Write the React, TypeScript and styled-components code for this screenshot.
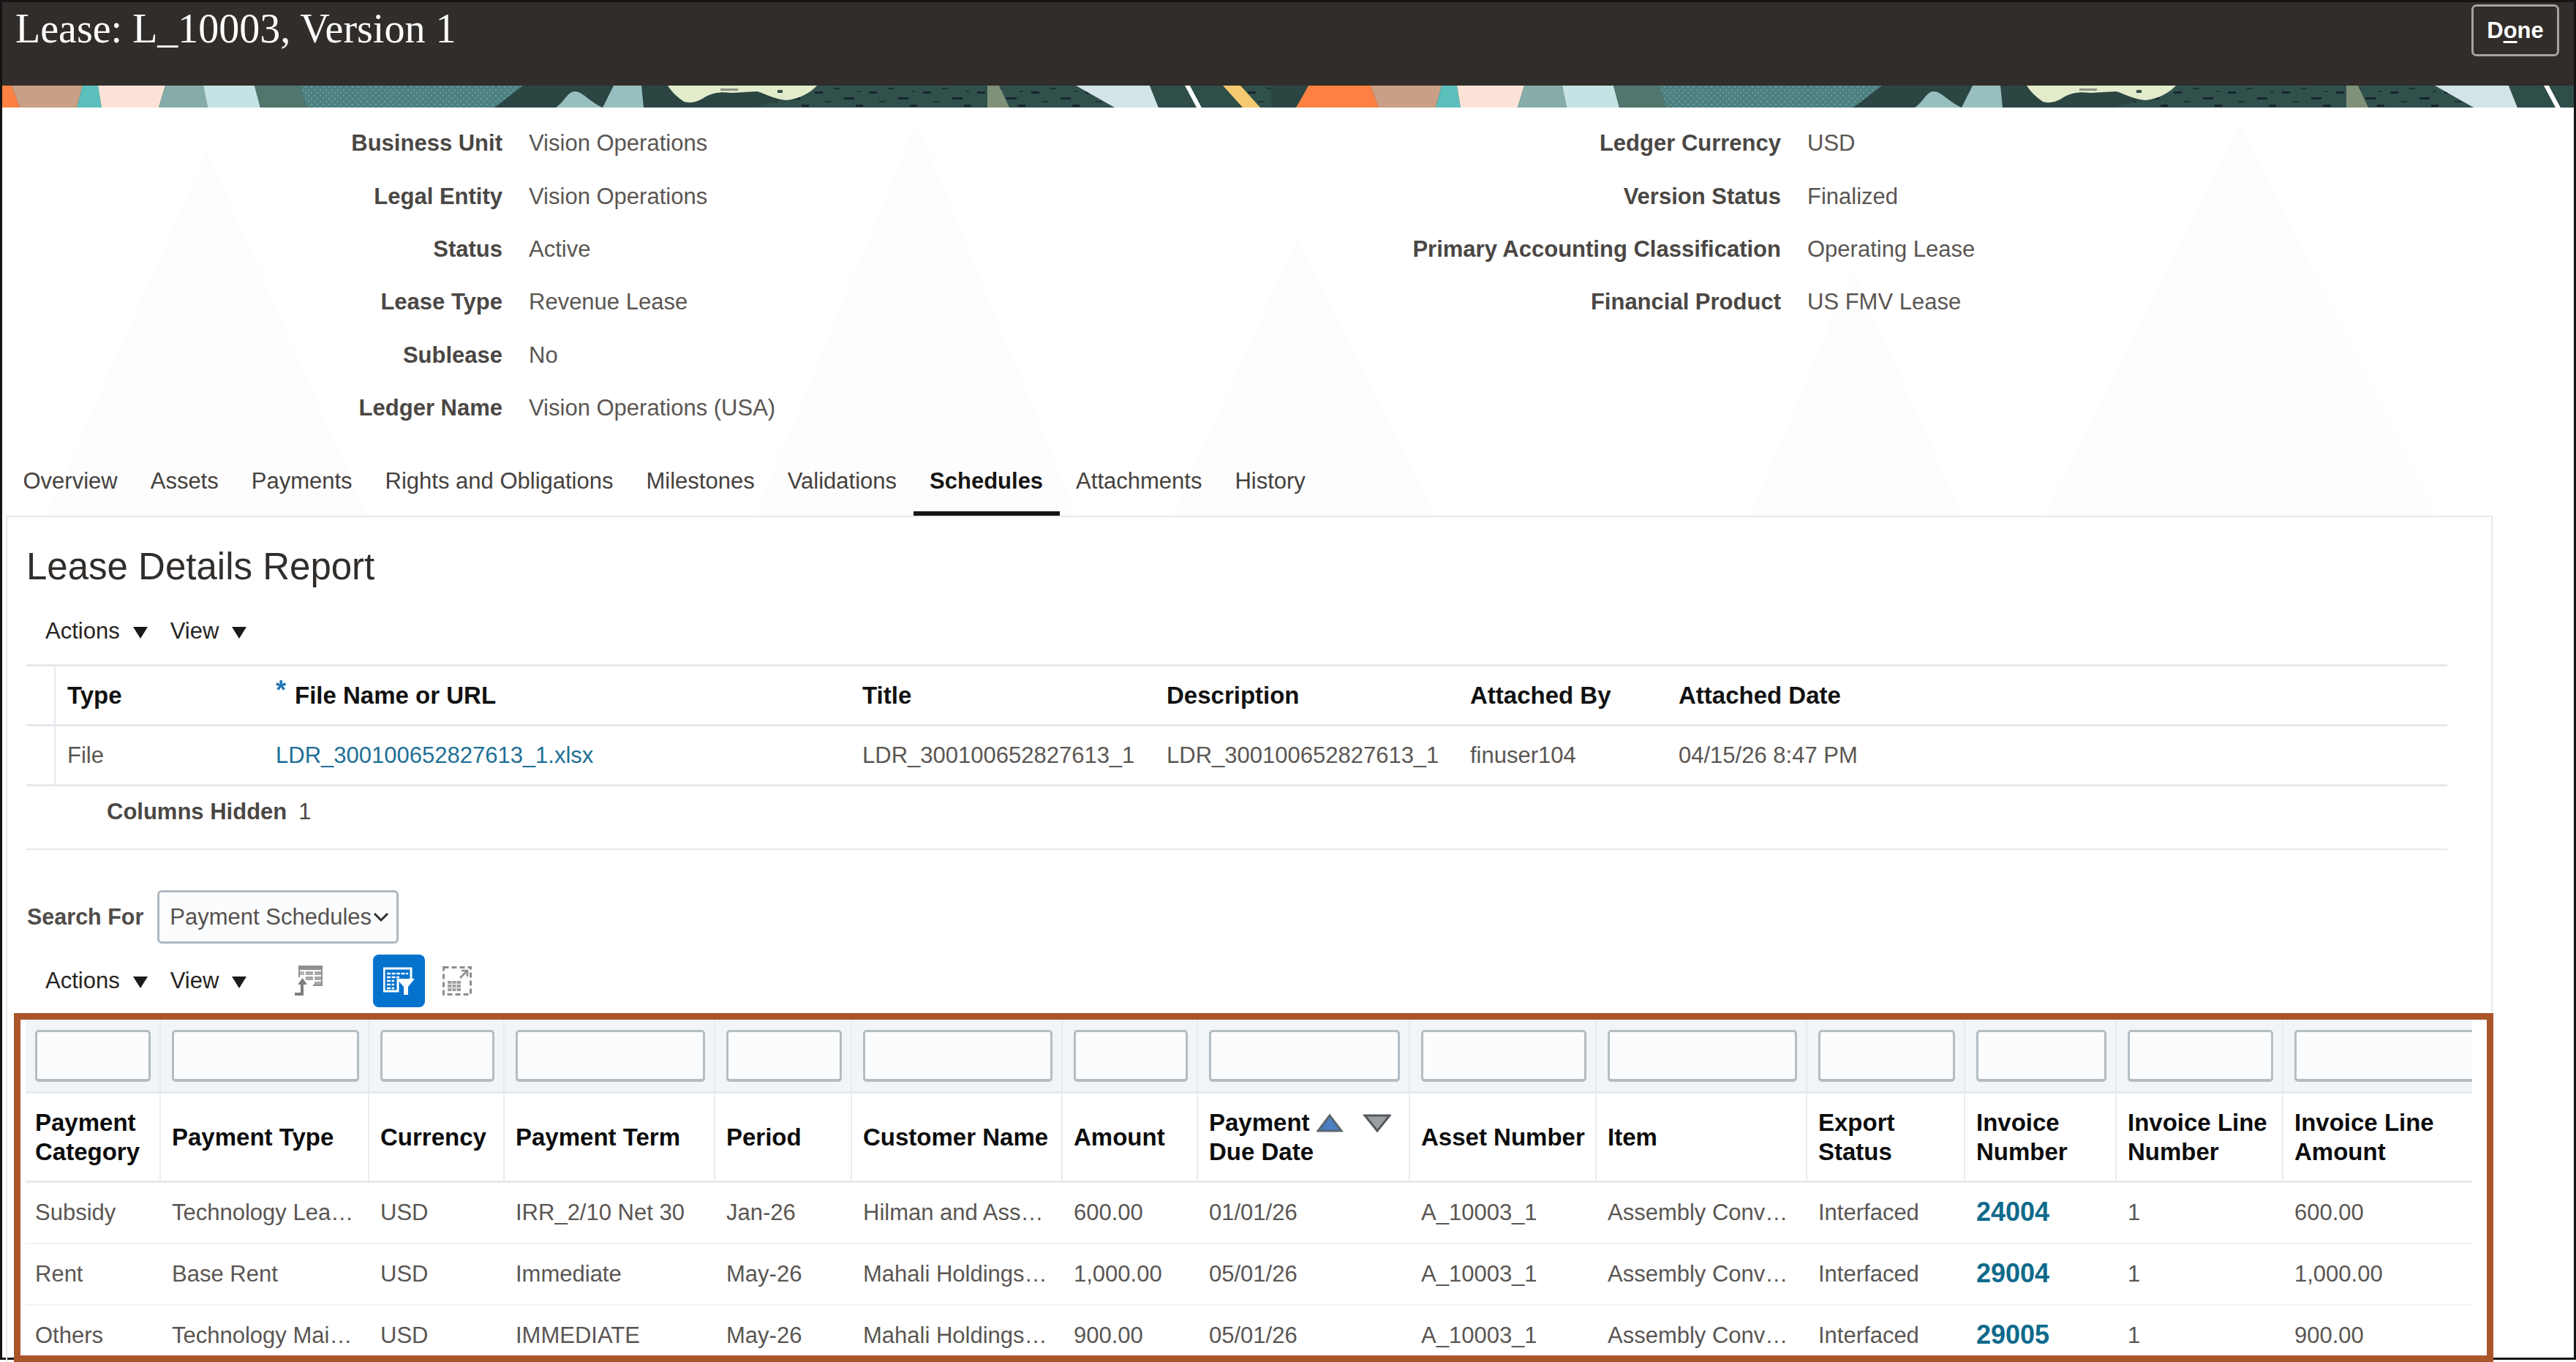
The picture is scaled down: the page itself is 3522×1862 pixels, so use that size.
import React from 'react';
import styled, { createGlobalStyle } from 'styled-components';

const GlobalStyle = createGlobalStyle`
  html, body {
    margin: 0;
    padding: 0;
    background: #ffffff;
  }
  body {
    font-family: "Liberation Sans", Arial, sans-serif;
    font-size: 31px;
  }
`;

const Shot = styled.div`
  width: 3522px;
  height: 1862px;
  overflow: hidden;
  background: #ffffff;
`;

const Frame = styled.div`
  box-sizing: border-box;
  width: 3522px;
  height: 1859px;
  border: 3px solid #141414;
  background: #ffffff;
`;

const Header = styled.header`
  box-sizing: border-box;
  height: 114px;
  padding: 3px 20px 0 18px;
  background: #312d2a;
  display: flex;
  justify-content: space-between;
  align-items: flex-start;
`;

const PageTitle = styled.h1`
  margin: 0;
  font-family: "Liberation Serif", "Times New Roman", serif;
  font-size: 56px;
  line-height: 66px;
  font-weight: 400;
  color: #ffffff;
`;

const DoneButton = styled.button`
  box-sizing: border-box;
  width: 120px;
  height: 71px;
  padding: 0;
  background: transparent;
  border: 3px solid #a5a3a1;
  border-radius: 7px;
  color: #ffffff;
  font-family: inherit;
  font-size: 31px;
  font-weight: 700;

  u {
    text-underline-offset: 4px;
  }
`;

const BannerArt = styled.svg`
  display: block;
  width: 3516px;
  height: 30px;
`;

const Upper = styled.div`
  position: relative;
`;

const Watermark = styled.svg`
  position: absolute;
  left: 0;
  top: 0;
  width: 3516px;
  height: 558px;
`;

const Form = styled.section`
  position: relative;
  height: 464px;
  padding-top: 13px;
  box-sizing: border-box;
  display: flex;
`;

const FormColumn = styled.dl<{ $labelWidth: number; $width: number }>`
  margin: 0;
  width: ${({ $width }) => $width}px;
  display: grid;
  grid-template-columns: ${({ $labelWidth }) => $labelWidth}px 1fr;
  grid-auto-rows: 72.4px;
  column-gap: 36px;
  align-items: center;
  align-content: start;
`;

const FormLabel = styled.dt`
  text-align: right;
  font-weight: 700;
  color: #4a4744;
`;

const FormValue = styled.dd`
  margin: 0;
  color: #5a5653;
`;

const TabBar = styled.nav`
  position: relative;
  height: 94px;
  padding-left: 6px;
  display: flex;
`;

const Tab = styled.div<{ $active?: boolean }>`
  padding: 0 22.5px;
  display: flex;
  align-items: center;
  color: ${({ $active }) => ($active ? '#161513' : '#45413e')};
  font-weight: ${({ $active }) => ($active ? 700 : 400)};
  box-shadow: ${({ $active }) => ($active ? 'inset 0 -6px 0 #161513' : 'none')};
`;

const Panel = styled.main`
  box-sizing: border-box;
  width: 3400px;
  margin-left: 5px;
  height: 1160px;
  border: 2px solid #e4e9ed;
  border-bottom: none;
`;

const PanelTitle = styled.h2`
  margin: 0;
  padding: 38px 0 0 26px;
  font-size: 51px;
  line-height: 60px;
  font-weight: 400;
  color: #312d2a;
`;

const MenuRow = styled.div`
  margin-top: 33px;
  height: 50px;
  padding-left: 52px;
  display: flex;
  align-items: center;
`;

const MenuButton = styled.div`
  display: flex;
  align-items: center;
  gap: 18px;
  margin-right: 31px;
  color: #262422;
`;

const MenuArrow = styled.span`
  width: 0;
  height: 0;
  margin-top: 4px;
  border-left: 10px solid transparent;
  border-right: 10px solid transparent;
  border-top: 16px solid #1c1a18;
`;

const AttachmentTable = styled.div`
  margin: 20px 0 0 26px;
  width: 3310px;
  border-top: 3px solid #e4e9ed;
`;

const AttachmentRow = styled.div<{ $head?: boolean }>`
  box-sizing: border-box;
  height: 82px;
  display: grid;
  grid-template-columns: 40px 285px 802px 416px 415px 285px 1fr;
  border-bottom: 3px solid #e4e9ed;
  color: ${({ $head }) => ($head ? '#111111' : '#5a5653')};
  font-weight: ${({ $head }) => ($head ? 700 : 400)};
  font-size: ${({ $head }) => ($head ? '33px' : '31px')};
`;

const AttachmentCell = styled.div`
  padding-left: 16px;
  display: flex;
  align-items: center;
  white-space: nowrap;
`;

const SpacerCell = styled.div`
  border-right: 2px solid #e8ecef;
`;

const Required = styled.span`
  color: #1f78b4;
  font-size: 36px;
  line-height: 1;
  margin: -14px 12px 0 0;
`;

const FileLink = styled.a`
  color: #1e6f96;
`;

const HiddenNote = styled.div`
  box-sizing: border-box;
  margin-left: 26px;
  width: 3310px;
  height: 87px;
  padding: 14px 0 0 110px;
  line-height: 42px;
  border-bottom: 2px solid #e4e9ed;
  color: #4a4744;
  font-weight: 700;

  span {
    margin-left: 16px;
    font-weight: 400;
  }
`;

const SearchRow = styled.div`
  margin-top: 55px;
  padding-left: 27px;
  display: flex;
  align-items: center;
  gap: 19px;
`;

const SearchLabel = styled.span`
  font-size: 30.5px;
  font-weight: 700;
  color: #4f4c49;
`;

const SelectBox = styled.div`
  box-sizing: border-box;
  width: 330px;
  height: 73px;
  padding: 0 10px 0 14px;
  display: flex;
  align-items: center;
  justify-content: space-between;
  background: #fbfcfd;
  border: 3px solid #aeb8c0;
  border-radius: 6px;
  color: #55514e;
`;

const Toolbar = styled.div`
  margin-top: 15px;
  height: 72px;
  padding-left: 52px;
  display: flex;
  align-items: center;
`;

const ToolIcon = styled.svg<{ $gapBefore: number }>`
  display: block;
  flex: none;
  margin-left: ${({ $gapBefore }) => $gapBefore}px;
`;

const FilterToggle = styled.div`
  box-sizing: border-box;
  width: 71px;
  height: 72px;
  margin-left: 68px;
  border-radius: 8px;
  background: #0572ce;
  display: flex;
  align-items: center;
  justify-content: center;
`;

const Highlight = styled.div`
  box-sizing: border-box;
  width: 3390px;
  height: 477px;
  margin: 8px 0 0 9px;
  border: 9.5px solid #ab552b;
  padding-left: 7px;
  background: #ffffff;
`;

const GRID_COLUMNS =
  '185px 285px 185px 288px 187px 288px 185px 290px 255px 288px 216px 207px 228px 258px';

const ResultTable = styled.div`
  width: 3345px;
  height: 459px;
  overflow: hidden;
`;

const FilterRow = styled.div`
  box-sizing: border-box;
  height: 101px;
  display: grid;
  grid-template-columns: ${GRID_COLUMNS};
  background: #f2f5f7;
  border-bottom: 3px solid #e6eaee;
`;

const FilterCell = styled.div`
  box-sizing: border-box;
  padding: 14px 12px 0 15px;
  overflow: hidden;
  border-right: 2px solid #e8ecef;

  &:first-child {
    padding-left: 13px;
  }

  &:last-child {
    border-right: none;
    padding-right: 0;
  }
`;

const FilterInput = styled.div<{ $clipped?: boolean }>`
  box-sizing: border-box;
  width: ${({ $clipped }) => ($clipped ? '300px' : '100%')};
  height: 71px;
  background: #fbfcfd;
  border: 3px solid #b3bdc4;
  border-bottom-width: 4px;
  border-radius: 5px;
`;

const HeadRow = styled.div`
  box-sizing: border-box;
  height: 122px;
  display: grid;
  grid-template-columns: ${GRID_COLUMNS};
  border-bottom: 3px solid #e6eaee;
`;

const HeadCell = styled.div`
  box-sizing: border-box;
  padding-left: 15px;
  display: flex;
  flex-direction: column;
  justify-content: center;
  font-size: 33px;
  line-height: 40px;
  font-weight: 700;
  color: #0c0c0c;
  white-space: nowrap;
  border-right: 2px solid #e8ecef;

  &:first-child {
    padding-left: 13px;
  }

  &:last-child {
    border-right: none;
  }
`;

const HeadLine = styled.span`
  display: flex;
  align-items: center;
`;

const SortIcons = styled.svg`
  display: block;
  margin-left: 9px;
`;

const DataRow = styled.div`
  box-sizing: border-box;
  height: 84px;
  display: grid;
  grid-template-columns: ${GRID_COLUMNS};
  border-bottom: 2px solid #f0f2f4;
`;

const DataCell = styled.div`
  padding-left: 15px;
  display: flex;
  align-items: center;
  white-space: nowrap;
  color: #5a5653;

  &:first-child {
    padding-left: 13px;
  }
`;

const InvoiceLink = styled.a`
  margin-top: -3px;
  font-size: 36px;
  font-weight: 700;
  color: #0f6a8b;
`;

const Chevron = () => (
  <svg width="22" height="14" viewBox="0 0 22 14">
    <path d="M2 2 L11 11 L20 2" fill="none" stroke="#2f2c2a" strokeWidth="3" />
  </svg>
);

// one repeat of the page banner, 1858px wide
const BannerTile = ({ x }: { x: number }) => (
  <g transform={`translate(${x} 0)`}>
    <rect x="-120" y="0" width="1858" height="30" fill="#2b4542" />
    <polygon points="-69,0 16,0 27,30 -86,30" fill="#fc8142" />
    <polygon points="16,0 113,0 105,30 27,30" fill="#c9a085" />
    <polygon points="113,0 134,0 139,30 105,30" fill="#5bbfbc" />
    <polygon points="134,0 226,0 217,30 139,30" fill="#fde3d7" />
    <polygon points="226,0 278,0 284,30 217,30" fill="#85aca9" />
    <polygon points="278,0 348,0 356,30 284,30" fill="#c5e3e5" />
    <polygon points="348,0 410,0 420,30 356,30" fill="#50766d" />
    <polygon points="410,0 715,0 676,30 420,30" fill="#4d8080" />
    <polygon points="410,0 715,0 676,30 420,30" fill="url(#tealDots)" />
    <path d="M760 30 C772 22 776 8 786 8 C796 8 806 22 824 30 Z" fill="#97bfbf" />
    <polygon points="839,0 877,0 880,30 824,30" fill="#97bfbf" />
    <polygon points="1117,0 1772,0 1772,30 1030,30 1060,22" fill="#30504c" />
    <polygon points="1117,0 1772,0 1772,30 1030,30 1060,22" fill="url(#darkDashes)" />
    <path
      d="M913 0 L1117 0 C1110 8 1095 18 1075 20 C1055 18 1045 10 1035 8 L1000 10 C985 8 975 10 965 15 C955 22 945 25 935 22 C925 15 918 8 913 0 Z"
      fill="#e2eccb"
    />
    <rect x="985" y="4" width="24" height="3" fill="#8b9488" />
    <rect x="1063" y="6" width="7" height="4" fill="#3a4f48" />
    <polygon points="1350,0 1366,0 1380,30 1350,30" fill="#7f9179" />
    <polygon points="1471,0 1572,0 1584,30 1524,30" fill="#d3e4e6" />
    <polygon points="1572,0 1620,0 1636,30 1584,30" fill="#2f4d49" />
    <polygon points="1620,0 1627,0 1643,30 1636,30" fill="#ffffff" />
    <polygon points="1627,0 1672,0 1699,30 1643,30" fill="#2f4d49" />
    <polygon points="1672,0 1696,0 1723,30 1699,30" fill="#f4c971" />
  </g>
);

const Banner = () => (
  <BannerArt viewBox="3 0 3516 30" aria-hidden="true">
    <defs>
      <pattern id="darkDashes" width="74" height="30" patternUnits="userSpaceOnUse">
        <rect x="4" y="8" width="11" height="3" fill="#17262a" />
        <rect x="30" y="3" width="8" height="2" fill="#1d3333" />
        <rect x="44" y="16" width="14" height="3" fill="#17262a" />
        <rect x="18" y="21" width="9" height="2" fill="#1d3333" />
        <rect x="60" y="26" width="10" height="3" fill="#17262a" />
        <rect x="62" y="7" width="5" height="2" fill="#1d3333" />
      </pattern>
      <pattern id="tealDots" width="8" height="8" patternUnits="userSpaceOnUse">
        <rect x="1" y="1" width="2" height="2" fill="#6d9c9b" />
        <rect x="5" y="5" width="2" height="2" fill="#6d9c9b" />
      </pattern>
    </defs>
    <BannerTile x={0} />
    <BannerTile x={1858} />
  </BannerArt>
);

const ExportIcon = () => (
  <ToolIcon $gapBefore={34} width="40" height="42" viewBox="0 0 40 42" aria-hidden="true">
    <g fill="#8f8f8f">
      <rect x="6" y="0" width="33" height="6" />
      <rect x="6" y="8" width="8" height="5" fill="#b5b5b5" />
      <rect x="16" y="8" width="10" height="5" fill="#a8a8a8" />
      <rect x="28" y="8" width="10" height="5" fill="#a8a8a8" />
      <rect x="16" y="15" width="10" height="5" fill="#a8a8a8" />
      <rect x="28" y="15" width="10" height="5" fill="#a8a8a8" />
      <rect x="28" y="22" width="10" height="5" fill="#a8a8a8" />
      <rect x="6" y="0" width="2" height="16" />
      <rect x="37" y="0" width="2" height="28" />
      <rect x="26" y="26" width="12" height="2" />
    </g>
    <path d="M1 39 H11 V24" fill="none" stroke="#7d7d7d" strokeWidth="4" />
    <path d="M5 26 L11.5 17 L18 26 Z" fill="#7d7d7d" />
  </ToolIcon>
);

const FilterRowIcon = () => (
  <svg width="43" height="39" viewBox="0 0 43 39" aria-hidden="true">
    <path d="M1 2 H38 V18 H20 V33 H1 Z" fill="none" stroke="#ffffff" strokeWidth="3" />
    <path d="M5 9 H34 M5 14 H22 M5 19 H15 M5 24 H15 M5 29 H15" stroke="#ffffff" strokeWidth="2.5" strokeDasharray="5 1.5" />
    <path d="M18 16 H43 L34 27 V38 H28 V27 Z" fill="#ffffff" />
  </svg>
);

const DetachIcon = () => (
  <ToolIcon $gapBefore={24} width="40" height="40" viewBox="0 0 40 40" aria-hidden="true">
    <rect x="1.5" y="1.5" width="37" height="37" fill="none" stroke="#8d8d8d" strokeWidth="3" strokeDasharray="7 4" />
    <path d="M24 16 L33 7 M26 6 H34 V14" fill="none" stroke="#8d8d8d" strokeWidth="2.5" />
    <g fill="#9c9c9c">
      <rect x="7" y="20" width="18" height="14" />
    </g>
    <path d="M7 24.5 H25 M7 29.5 H25 M13 20 V34 M19 20 V34" stroke="#e6e6e6" strokeWidth="1.5" />
  </ToolIcon>
);

const formLeft = [
  ['Business Unit', 'Vision Operations'],
  ['Legal Entity', 'Vision Operations'],
  ['Status', 'Active'],
  ['Lease Type', 'Revenue Lease'],
  ['Sublease', 'No'],
  ['Ledger Name', 'Vision Operations (USA)'],
];

const formRight = [
  ['Ledger Currency', 'USD'],
  ['Version Status', 'Finalized'],
  ['Primary Accounting Classification', 'Operating Lease'],
  ['Financial Product', 'US FMV Lease'],
];

const tabs = [
  'Overview',
  'Assets',
  'Payments',
  'Rights and Obligations',
  'Milestones',
  'Validations',
  'Schedules',
  'Attachments',
  'History',
];

const headers: string[][] = [
  ['Payment', 'Category'],
  ['Payment Type'],
  ['Currency'],
  ['Payment Term'],
  ['Period'],
  ['Customer Name'],
  ['Amount'],
  ['Payment', 'Due Date'],
  ['Asset Number'],
  ['Item'],
  ['Export', 'Status'],
  ['Invoice', 'Number'],
  ['Invoice Line', 'Number'],
  ['Invoice Line', 'Amount'],
];

const rows: string[][] = [
  ['Subsidy', 'Technology Lea…', 'USD', 'IRR_2/10 Net 30', 'Jan-26', 'Hilman and Ass…', '600.00', '01/01/26', 'A_10003_1', 'Assembly Conv…', 'Interfaced', '24004', '1', '600.00'],
  ['Rent', 'Base Rent', 'USD', 'Immediate', 'May-26', 'Mahali Holdings…', '1,000.00', '05/01/26', 'A_10003_1', 'Assembly Conv…', 'Interfaced', '29004', '1', '1,000.00'],
  ['Others', 'Technology Mai…', 'USD', 'IMMEDIATE', 'May-26', 'Mahali Holdings…', '900.00', '05/01/26', 'A_10003_1', 'Assembly Conv…', 'Interfaced', '29005', '1', '900.00'],
];

const INVOICE_COLUMN = 11;

export default function App() {
  return (
    <Shot>
      <GlobalStyle />
      <Frame>
        <Header>
          <PageTitle>Lease: L_10003, Version 1</PageTitle>
          <DoneButton>
            D<u>o</u>ne
          </DoneButton>
        </Header>
        <Banner />

        <Upper>
          <Watermark viewBox="0 0 3516 558" aria-hidden="true">
            <g fill="#fdfdfd">
              <polygon points="280,60 60,558 500,558" />
              <polygon points="1250,20 1030,558 1470,558" />
              <polygon points="1770,180 1600,558 1960,558" />
              <polygon points="3060,20 2790,558 3330,558" />
              <polygon points="2530,220 2390,558 2680,558" />
            </g>
          </Watermark>
          <Form>
            <FormColumn $width={1897} $labelWidth={684}>
              {formLeft.map(([label, value]) => (
                <React.Fragment key={label}>
                  <FormLabel>{label}</FormLabel>
                  <FormValue>{value}</FormValue>
                </React.Fragment>
              ))}
            </FormColumn>
            <FormColumn $width={1500} $labelWidth={535}>
              {formRight.map(([label, value]) => (
                <React.Fragment key={label}>
                  <FormLabel>{label}</FormLabel>
                  <FormValue>{value}</FormValue>
                </React.Fragment>
              ))}
            </FormColumn>
          </Form>
          <TabBar>
            {tabs.map((tab) => (
              <Tab key={tab} $active={tab === 'Schedules'}>
                {tab}
              </Tab>
            ))}
          </TabBar>
        </Upper>

        <Panel>
          <PanelTitle>Lease Details Report</PanelTitle>
          <MenuRow>
            <MenuButton>
              Actions <MenuArrow />
            </MenuButton>
            <MenuButton>
              View <MenuArrow />
            </MenuButton>
          </MenuRow>

          <AttachmentTable>
            <AttachmentRow $head>
              <SpacerCell />
              <AttachmentCell>Type</AttachmentCell>
              <AttachmentCell>
                <Required>*</Required> File Name or URL
              </AttachmentCell>
              <AttachmentCell>Title</AttachmentCell>
              <AttachmentCell>Description</AttachmentCell>
              <AttachmentCell>Attached By</AttachmentCell>
              <AttachmentCell>Attached Date</AttachmentCell>
            </AttachmentRow>
            <AttachmentRow>
              <SpacerCell />
              <AttachmentCell>File</AttachmentCell>
              <AttachmentCell>
                <FileLink>LDR_300100652827613_1.xlsx</FileLink>
              </AttachmentCell>
              <AttachmentCell>LDR_300100652827613_1</AttachmentCell>
              <AttachmentCell>LDR_300100652827613_1</AttachmentCell>
              <AttachmentCell>finuser104</AttachmentCell>
              <AttachmentCell>04/15/26 8:47 PM</AttachmentCell>
            </AttachmentRow>
          </AttachmentTable>

          <HiddenNote>
            Columns Hidden<span>1</span>
          </HiddenNote>

          <SearchRow>
            <SearchLabel>Search For</SearchLabel>
            <SelectBox>
              Payment Schedules
              <Chevron />
            </SelectBox>
          </SearchRow>

          <Toolbar>
            <MenuButton>
              Actions <MenuArrow />
            </MenuButton>
            <MenuButton>
              View <MenuArrow />
            </MenuButton>
            <ExportIcon />
            <FilterToggle>
              <FilterRowIcon />
            </FilterToggle>
            <DetachIcon />
          </Toolbar>

          <Highlight>
            <ResultTable>
              <FilterRow>
                {headers.map((_, i) => (
                  <FilterCell key={i}>
                    <FilterInput $clipped={i === headers.length - 1} />
                  </FilterCell>
                ))}
              </FilterRow>
              <HeadRow>
                {headers.map((lines, i) => (
                  <HeadCell key={i}>
                    {lines.map((line, j) => (
                      <HeadLine key={line}>
                        {line}
                        {i === 7 && j === 0 && (
                          <SortIcons width="102" height="26" viewBox="0 0 102 26" aria-hidden="true">
                            <polygon points="18,3 34,24 2,24" fill="#4a7fc1" stroke="#5c6670" strokeWidth="3" />
                            <polygon points="66,3 100,3 83,24" fill="#9a9ea2" stroke="#55595d" strokeWidth="3" />
                          </SortIcons>
                        )}
                      </HeadLine>
                    ))}
                  </HeadCell>
                ))}
              </HeadRow>
              {rows.map((row) => (
                <DataRow key={row[INVOICE_COLUMN]}>
                  {row.map((value, i) => (
                    <DataCell key={i}>
                      {i === INVOICE_COLUMN ? <InvoiceLink>{value}</InvoiceLink> : value}
                    </DataCell>
                  ))}
                </DataRow>
              ))}
            </ResultTable>
          </Highlight>
        </Panel>
      </Frame>
    </Shot>
  );
}
